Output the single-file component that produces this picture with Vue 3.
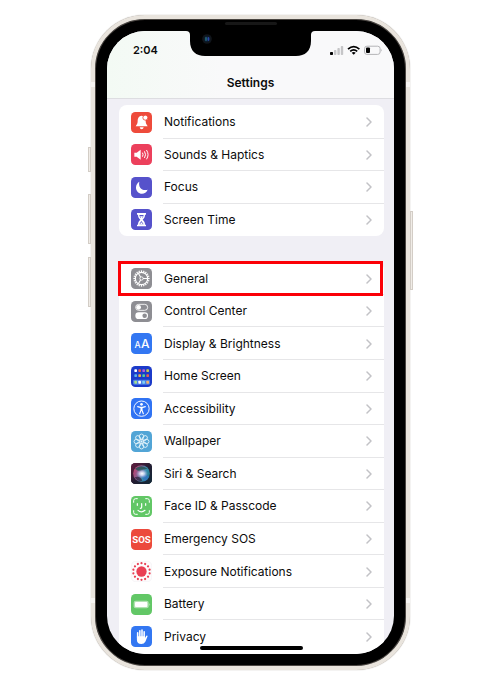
<script setup>
const groups = [
  {
    name: 'alerts',
    items: [
      { id: 'notifications', label: 'Notifications', color: '#ee4b3b' },
      { id: 'sounds', label: 'Sounds & Haptics', color: '#ec405c' },
      { id: 'focus', label: 'Focus', color: '#5652cb' },
      { id: 'screentime', label: 'Screen Time', color: '#5652cb' }
    ]
  },
  {
    name: 'system',
    items: [
      { id: 'general', label: 'General', color: '#8e8e93', marked: true },
      { id: 'control', label: 'Control Center', color: '#8e8e93' },
      { id: 'display', label: 'Display & Brightness', color: '#3377f2' },
      { id: 'home', label: 'Home Screen', color: '#1c3bc9' },
      { id: 'accessibility', label: 'Accessibility', color: '#3073f3' },
      { id: 'wallpaper', label: 'Wallpaper', color: '#52a5d6' },
      { id: 'siri', label: 'Siri & Search', color: '#1c1a2c' },
      { id: 'faceid', label: 'Face ID & Passcode', color: '#62c766' },
      { id: 'sos', label: 'Emergency SOS', color: '#ec4a3c' },
      { id: 'exposure', label: 'Exposure Notifications', color: '#fdfcfd' },
      { id: 'battery', label: 'Battery', color: '#62c766' },
      { id: 'privacy', label: 'Privacy', color: '#3377f2' }
    ]
  }
]

const spin = (count) => Array.from({ length: count }, (_, i) => (i * 360) / count)
const teeth = spin(20)
const petals = spin(8)
const dots = spin(14)

const apps = [
  { x: 10, y: 10, fill: '#fff' }, { x: 22, y: 10, fill: '#ea5a50' }, { x: 34, y: 10, fill: '#b45fd8' }, { x: 46, y: 10, fill: '#c5c94c' },
  { x: 10, y: 25, fill: '#58b4ee' }, { x: 22, y: 25, fill: '#f0b04a' }, { x: 34, y: 25, fill: '#4fcf9a' }, { x: 46, y: 25, fill: '#e8604c' }
]
</script>

<template>
  <main class="page">
    <div class="phone">
      <span class="side mute"></span>
      <span class="side up"></span>
      <span class="side down"></span>
      <span class="side power"></span>
      <span class="band left high"></span>
      <span class="band right high"></span>
      <span class="band left low"></span>
      <span class="band right low"></span>
      <span class="speaker"></span>

      <div class="screen">
        <header class="top">
          <div class="status">
            <time class="clock">2:04</time>
            <svg class="signals" viewBox="0 0 53 10" aria-label="Signal, Wi-Fi, low battery">
              <rect x="0" y="7" width="3" height="3" rx="0.8" fill="#000" />
              <rect x="4" y="5" width="2.4" height="5" rx="0.8" fill="#c5c5c7" />
              <rect x="7.4" y="3" width="2.4" height="7" rx="0.8" fill="#c5c5c7" />
              <rect x="10.8" y="1" width="2.4" height="9" rx="0.8" fill="#c5c5c7" />
              <g fill="none" stroke="#000" stroke-width="1.7">
                <path d="M18 4.1 Q23.7 -1 29.4 4.1" />
                <path d="M20.2 6.4 Q23.7 3.3 27.2 6.4" />
              </g>
              <path d="M23.7 9.8 L21.7 7.8 Q23.7 6.3 25.7 7.8 Z" fill="#000" />
              <rect x="34.5" y="1.2" width="15.6" height="8.2" rx="2.4" fill="none" stroke="#b4b4b7" />
              <rect x="36" y="2.6" width="4" height="5.4" rx="1" fill="#000" />
              <path d="M51.2 4 Q52.6 5.3 51.2 6.6 Z" fill="#a9a9ac" />
            </svg>
          </div>
          <h1 class="title">Settings</h1>
        </header>

        <svg class="notch" viewBox="0 0 129 26" aria-hidden="true">
          <path d="M0 0 H129 Q125 0 125 4 V10 C125 20 119 25 110 25 H19 C10 25 4 20 4 10 V4 Q4 0 0 0 Z" fill="#000" />
          <circle cx="21" cy="8" r="4.8" fill="#10151b" />
          <circle cx="21" cy="8" r="3" fill="#0c1c30" />
          <ellipse cx="20" cy="8" rx="0.9" ry="2.2" fill="#236777" />
          <ellipse cx="22.4" cy="8" rx="1" ry="2" fill="#2947a5" />
        </svg>

        <nav class="lists" aria-label="Settings">
          <ul v-for="group in groups" :key="group.name" class="card" :class="group.name">
            <li v-for="item in group.items" :key="item.id" class="item" :class="{ marked: item.marked }">
              <a class="link" :href="'#' + item.id">
                <svg class="icon" viewBox="0 0 63 63" aria-hidden="true">
                  <rect width="63" height="63" rx="13" :fill="item.color" />

                  <g v-if="item.id === 'notifications'" fill="#fff">
                    <path d="M32 11 C23 12 20 19 20 28 C20 36 16 38 14 43 H50 C48 38 44 36 44 28 C44 18 40 12 32 11 Z" />
                    <path d="M26 46 H38 Q37 52 32 52 Q27 52 26 46 Z" />
                    <circle cx="43" cy="17" r="7.5" stroke="#ee4b3b" stroke-width="2.5" />
                  </g>

                  <g v-else-if="item.id === 'sounds'">
                    <path d="M10 26 H17 L29 17 V47 L17 38 H10 Z" fill="#fff" />
                    <g fill="none" stroke="#fff" stroke-width="3" stroke-linecap="round">
                      <path d="M35 27 Q38 32 35 37" />
                      <path d="M41 23 Q47 32 41 41" />
                      <path d="M47 19 Q56 32 47 45" />
                    </g>
                  </g>

                  <path v-else-if="item.id === 'focus'" d="M25 14 C21 30 33 43 50 38 C47 46 40 50 33 50 C23 50 15 42 15 32 C15 24 19 17 25 14 Z" fill="#fff" />

                  <g v-else-if="item.id === 'screentime'">
                    <path d="M18 12 H45 V17 H42 C42 25 39 28 35 32 C39 36 42 39 42 47 H45 V52 H18 V47 H21 C21 39 24 36 28 32 C24 28 21 25 21 17 H18 Z" fill="#fff" />
                    <path d="M25 18 H38 Q37 24 34 27 H29 Q26 24 25 18 Z M31 36 L38 46 H25 Z" fill="#5652cb" />
                    <path d="M27 22 H36 L32 30 Z M31 40 L36 46 H27 Z" fill="#fff" />
                  </g>

                  <g v-else-if="item.id === 'general'" fill="none" stroke="#fff">
                    <circle cx="31.5" cy="31.5" r="18.5" stroke-width="3.6" />
                    <path v-for="a in teeth" :key="a" d="M31.5 7 V13" stroke-width="3.6" :transform="`rotate(${a} 31.5 31.5)`" />
                    <path d="M36 31.5 H49 M29 27.5 L22.5 16.5 M29 35.5 L22.5 46.5" stroke-width="3.2" />
                    <circle cx="31.5" cy="31.5" r="5" stroke-width="2.6" />
                  </g>

                  <g v-else-if="item.id === 'control'">
                    <rect x="14" y="10" width="36" height="18" rx="9" fill="none" stroke="#fff" stroke-width="2.6" />
                    <circle cx="23" cy="19" r="7" fill="#fff" />
                    <rect x="13" y="34" width="38" height="20" rx="10" fill="#fff" />
                    <circle cx="41" cy="44" r="6.8" fill="#8e8e93" />
                  </g>

                  <g v-else-if="item.id === 'display'" class="glyphs">
                    <text x="20" y="45" font-size="26">A</text>
                    <text x="43" y="45" font-size="36">A</text>
                  </g>

                  <g v-else-if="item.id === 'home'">
                    <rect v-for="app in apps" :key="app.x + '-' + app.y" :x="app.x" :y="app.y" width="8" height="8" rx="2" :fill="app.fill" />
                    <rect x="6" y="41" width="51" height="15" rx="4" fill="#4a7fe8" />
                    <rect x="10" y="44" width="8" height="9" rx="2" fill="#a5e08c" />
                    <rect x="22" y="44" width="8" height="9" rx="2" fill="#fff" />
                    <rect x="34" y="44" width="8" height="9" rx="2" fill="#7fd0f5" />
                    <rect x="46" y="44" width="8" height="9" rx="2" fill="#f0b070" />
                  </g>

                  <g v-else-if="item.id === 'accessibility'">
                    <circle cx="31.5" cy="32" r="23" fill="none" stroke="#fff" stroke-width="2.8" />
                    <circle cx="31.5" cy="19" r="4" fill="#fff" />
                    <path d="M20 26 L28 28 H35 L43 26 M31.5 28 V37 M30 29 V37 L26 47 M33 29 V37 L37 47" fill="none" stroke="#fff" stroke-width="3.4" stroke-linecap="round" stroke-linejoin="round" />
                  </g>

                  <g v-else-if="item.id === 'wallpaper'" fill="none" stroke="#e8f6fc" stroke-width="2.6">
                    <ellipse v-for="a in petals" :key="a" cx="31.5" cy="17" rx="6.6" ry="8" :transform="`rotate(${a} 31.5 31.5)`" />
                    <circle cx="31.5" cy="31.5" r="6" stroke-width="2.6" />
                    <circle cx="31.5" cy="31.5" r="2" fill="#e8f6fc" />
                  </g>

                  <g v-else-if="item.id === 'siri'">
                    <defs>
                      <linearGradient id="siri-back" x1="0" y1="0" x2="1" y2="1">
                        <stop offset="0" stop-color="#651d40" />
                        <stop offset="0.5" stop-color="#241c32" />
                        <stop offset="1" stop-color="#102b38" />
                      </linearGradient>
                      <linearGradient id="siri-orb" x1="0" y1="0.3" x2="1" y2="0.7">
                        <stop offset="0" stop-color="#c0406f" />
                        <stop offset="0.35" stop-color="#865f91" />
                        <stop offset="0.65" stop-color="#388fb0" />
                        <stop offset="1" stop-color="#247a8a" />
                      </linearGradient>
                      <radialGradient id="siri-glow">
                        <stop offset="0" stop-color="#fff" />
                        <stop offset="0.4" stop-color="#e5e4fb" stop-opacity="0.8" />
                        <stop offset="1" stop-color="#9ba7e0" stop-opacity="0" />
                      </radialGradient>
                    </defs>
                    <rect width="63" height="63" rx="13" fill="url(#siri-back)" />
                    <circle cx="31.5" cy="31.5" r="25" fill="url(#siri-orb)" />
                    <path d="M12 17 Q30 2 50 17 Q35 17 26 25 Q18 22 12 17 Z" fill="#255555" opacity="0.85" />
                    <path d="M11 43 Q27 36 34 53 Q19 57 11 43 Z" fill="#33233f" opacity="0.75" />
                    <path d="M30 34 Q46 34 54 41 Q48 54 39 54 Z" fill="#3473c5" opacity="0.75" />
                    <ellipse cx="33" cy="32" rx="18" ry="14" fill="url(#siri-glow)" />
                  </g>

                  <g v-else-if="item.id === 'faceid'" fill="none" stroke="#fff" stroke-width="3" stroke-linecap="round">
                    <path d="M8 19 V14 Q8 8 14 8 H19 M44 8 H49 Q55 8 55 14 V19 M55 44 V49 Q55 55 49 55 H44 M19 55 H14 Q8 55 8 49 V44" />
                    <path d="M19 23 V28 M44 23 V28 M32 23 V34 Q32 37 28 37 M21 43 Q31 52 42 43" stroke-width="3.6" />
                  </g>

                  <g v-else-if="item.id === 'sos'" class="glyphs heavy">
                    <text x="31.5" y="42" font-size="29">SOS</text>
                  </g>

                  <g v-else-if="item.id === 'exposure'" fill="#e94055">
                    <rect x="1" y="1" width="61" height="61" rx="13" fill="none" stroke="#f4f3f6" stroke-width="2" />
                    <circle cx="31.5" cy="31.5" r="15.5" />
                    <circle v-for="a in dots" :key="a" cx="31.5" cy="6.5" r="3.3" :transform="`rotate(${a} 31.5 31.5)`" />
                  </g>

                  <g v-else-if="item.id === 'battery'">
                    <rect x="8" y="20" width="45" height="23" rx="6" fill="#b2e2b3" />
                    <rect x="12" y="24" width="37" height="15" rx="3" fill="#fff" />
                    <path d="M55 27 Q60 31.5 55 36 Z" fill="#b2e2b3" />
                  </g>

                  <g v-else-if="item.id === 'privacy'">
                    <path d="M20 35 V20 M26.5 33 V14 M33 33 V12 M39.5 34 V17" fill="none" stroke="#fff" stroke-width="4.6" stroke-linecap="round" />
                    <path d="M17.7 31 H41.8 V36 L46 29 Q48.5 27 50 30 L43 47 Q39 54 31 54 Q18 54 17.7 41 Z" fill="#fff" />
                  </g>
                </svg>
                <span class="label">{{ item.label }}</span>
                <svg class="chevron" viewBox="0 0 6 10" aria-hidden="true">
                  <path d="M1 1 L5 5 L1 9" fill="none" stroke="#c2c2c6" stroke-width="1.5" stroke-linecap="round" stroke-linejoin="round" />
                </svg>
              </a>
            </li>
          </ul>
        </nav>
        <span class="home-bar"></span>
      </div>
    </div>
  </main>
</template>

<style>
body {
  margin: 0;
  background: #fff;
}
</style>

<style scoped>
.page {
  box-sizing: border-box;
  display: flex;
  min-height: 100vh;
  padding: 15px 90px 15px 91px;
  font-family: Inter, "Liberation Sans", sans-serif;
  color: #0c0c0c;
}

.phone {
  position: relative;
  display: flex;
  flex: 1;
  box-sizing: border-box;
  min-width: 0;
  padding: 12px;
  border: 4px solid #e9e4dd;
  border-radius: 54px;
  background: #000;
  box-shadow: inset 0 0 0 1px #4b4642, 0 0 1px #8d867f;
}

.side {
  position: absolute;
  box-sizing: border-box;
  width: 3px;
  border: 1px solid #d3cdc6;
  background: #f0ece7;
}

.mute { left: -7px; top: 128px; height: 25px; }
.up { left: -7px; top: 175px; height: 50px; }
.down { left: -7px; top: 238px; height: 50px; }
.power { right: -7px; top: 192px; height: 79px; }

.band {
  position: absolute;
  width: 4px;
  height: 5px;
  background: #f6f4f1;
}

.left { left: -4px; }
.right { right: -4px; }
.high { top: 63px; }
.low { bottom: 63px; }

.speaker {
  position: absolute;
  top: 3px;
  left: 50%;
  width: 52px;
  height: 3px;
  margin-left: -26px;
  border-radius: 2px;
  background: #171717;
}

.screen {
  position: relative;
  display: flex;
  flex: 1;
  flex-direction: column;
  min-width: 0;
  overflow: hidden;
  border-radius: 38px;
  background: #f0eff5;
}

.top {
  box-sizing: border-box;
  height: 68px;
  border-bottom: 1px solid #dddde1;
  background: linear-gradient(90deg, #f3faf4, #f9f9fa 40%);
}

.status {
  display: flex;
  align-items: center;
  justify-content: space-between;
  height: 37px;
  padding: 0 11px 0 26px;
}

.clock {
  font-size: 11px;
  font-weight: 600;
  line-height: 16px;
}

.signals {
  width: 53px;
  height: 10px;
}

.title {
  margin: 7px 0 0;
  font-size: 12px;
  font-weight: 600;
  line-height: 16px;
  text-align: center;
}

.notch {
  position: absolute;
  top: 0;
  left: 50%;
  width: 129px;
  height: 26px;
  margin-left: -65px;
}

.lists {
  display: flex;
  flex: 1;
  flex-direction: column;
  gap: 26px;
  padding: 6px 10px 0 12px;
}

.card {
  display: grid;
  grid-auto-rows: 1fr;
  flex: 4 0 0;
  margin: 0;
  padding: 1px 0 0;
  border-radius: 8px;
  background: #fff;
  list-style: none;
}

.system {
  flex-grow: 12;
  padding: 0 0 1px;
  border-radius: 8px 8px 0 0;
}

.item {
  position: relative;
  display: flex;
}

.marked::after {
  content: "";
  position: absolute;
  inset: -1px 1px -1px -1px;
  z-index: 1;
  border: 3px solid #fb0007;
  pointer-events: none;
}

.link {
  display: grid;
  grid-template-columns: 21px 1fr 6px;
  align-items: center;
  flex: 1;
  column-gap: 12px;
  padding: 0 12px;
  color: inherit;
  text-decoration: none;
}

.item:not(:last-child)::before {
  content: "";
  position: absolute;
  right: 0;
  bottom: 0;
  left: 44px;
  height: 1px;
  background: #e6e6e8;
}

.icon {
  width: 21px;
  height: 21px;
}

.label {
  font-size: 12px;
  line-height: 16px;
  white-space: nowrap;
}

.chevron {
  width: 6px;
  height: 10px;
}

.glyphs {
  fill: #fff;
  font-family: Inter, sans-serif;
  font-weight: 500;
  text-anchor: middle;
}

.heavy {
  font-family: Roboto, sans-serif;
  font-weight: 700;
}

.home-bar {
  position: absolute;
  bottom: 4px;
  left: 50%;
  width: 103px;
  height: 4px;
  margin-left: -51px;
  border-radius: 2px;
  background: #000;
}
</style>
